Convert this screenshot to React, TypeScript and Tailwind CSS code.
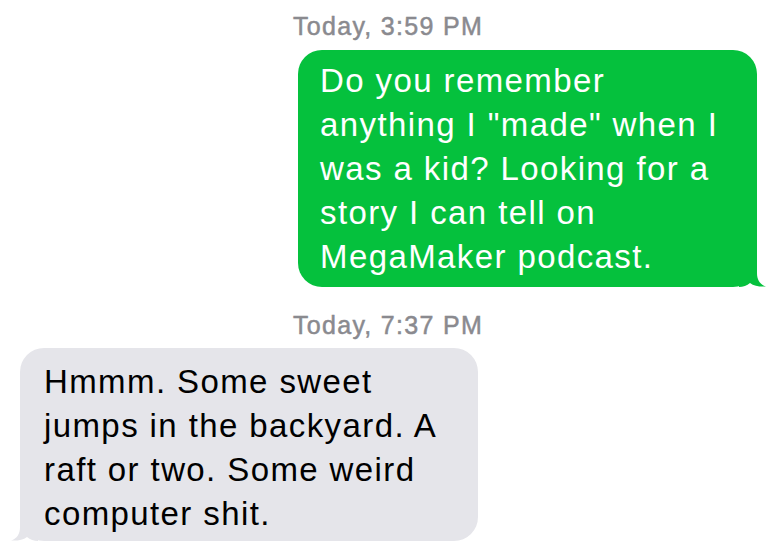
import React from "react";

// iOS 7 style message thread: timestamp, sent (green), timestamp, received (gray)

function Stamp({ children, className = "" }: { children: React.ReactNode; className?: string }) {
  return (
    <div
      className={`pr-[8px] text-center text-[25px] leading-[32px] tracking-[1.3px] text-[#8a8a8f] [-webkit-text-stroke:0.5px_#8a8a8f] ${className}`}
    >
      {children}
    </div>
  );
}

function Tail({ color, flip }: { color: string; flip?: boolean }) {
  return (
    <svg
      width="28"
      height="26"
      viewBox="0 0 28 26"
      className={flip ? "absolute bottom-0 left-[-10px] -scale-x-100" : "absolute bottom-0 right-[-10px]"}
    >
      <path
        d="M0,0 L18,0 L18,12 C18,19 21,23.5 27,25.5 C21,26 15,25 11,22 C8,24.5 4,26 0,26 Z"
        fill={color}
      />
    </svg>
  );
}

export default function App() {
  return (
    <div className="flex h-[556px] w-[784px] flex-col overflow-hidden bg-white font-['Liberation_Sans',Arial,sans-serif]">
      <Stamp className="pt-[10px]">Today, 3:59 PM</Stamp>

      <div className="relative mr-[27px] mt-[8px] w-[459px] self-end rounded-[24px] bg-[#05c13d] px-[22px] pb-[8px] pt-[9px] text-[33px] leading-[44px] tracking-[1.4px] text-white">
        Do you remember anything I "made" when I was a kid? Looking for a story I can tell on MegaMaker podcast.
        <Tail color="#05c13d" />
      </div>

      <Stamp className="mt-[22px]">Today, 7:37 PM</Stamp>

      <div className="relative ml-[20px] mt-[7px] w-[458px] self-start rounded-[24px] bg-[#e5e5ea] px-[24px] pb-[5px] pt-[12px] text-[33px] leading-[44px] tracking-[1.4px] text-black">
        Hmmm. Some sweet jumps in the backyard. A raft or two. Some weird computer shit.
        <Tail color="#e5e5ea" flip />
      </div>
    </div>
  );
}
